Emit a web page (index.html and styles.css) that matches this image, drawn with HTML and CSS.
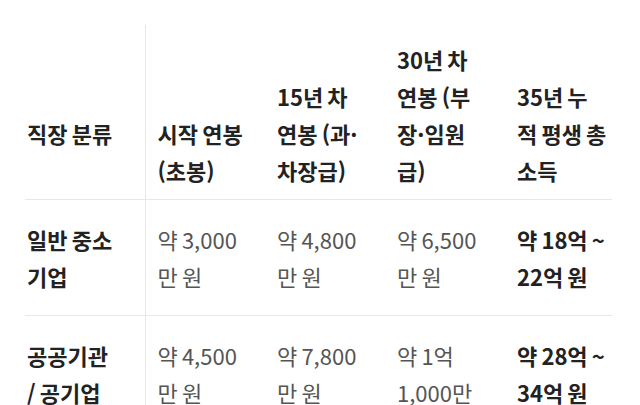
FILE: index.html
```html
<!DOCTYPE html>
<html lang="ko">
<head>
<meta charset="utf-8">
<title>직장 분류별 평생 소득</title>
<link rel="stylesheet" href="styles.css">
</head>
<body>
<div class="wrap">
<table class="salary">
  <colgroup>
    <col class="c1"><col class="c2"><col class="c3"><col class="c4"><col class="c5">
  </colgroup>
  <thead>
    <tr>
      <th class="cat cat-head">직장 분류</th>
      <th>시작 연봉 (초봉)</th>
      <th>15년 차 연봉 (과·차장급)</th>
      <th>30년 차 연봉 (부장·임원급)</th>
      <th class="total">35년 누적 평생 총 소득</th>
    </tr>
  </thead>
  <tbody>
    <tr>
      <th class="cat">일반 중소기업</th>
      <td>약 3,000만 원</td>
      <td>약 4,800만 원</td>
      <td>약 6,500만 원</td>
      <td class="total">약 18억 ~ 22억 원</td>
    </tr>
    <tr>
      <th class="cat">공공기관<br>/ 공기업</th>
      <td>약 4,500만 원</td>
      <td>약 7,800만 원</td>
      <td>약 1억 1,000만 원</td>
      <td class="total">약 28억 ~ 34억 원</td>
    </tr>
  </tbody>
</table>
</div>
</body>
</html>
```

FILE: styles.css
```css
html, body {
  margin: 0;
  padding: 0;
  background: #ffffff;
}

.wrap {
  padding: 25px 0 0 25px;
}

.salary {
  border-collapse: collapse;
  table-layout: fixed;
  width: 587px;
  font-family: "Noto Sans CJK KR", "Noto Sans", sans-serif;
  font-size: 22px;
  line-height: 37px;
  word-spacing: -2px;
  color: #555555;
}

.c1, .c2, .c3, .c4 { width: 120px; }
.c5 { width: 107px; }

.salary th,
.salary td {
  text-align: left;
  vertical-align: top;
  padding: 21px 21px 20px 12px;
  font-weight: 400;
}

.salary thead th {
  vertical-align: bottom;
  padding-top: 16px;
  padding-bottom: 10px;
  font-weight: 700;
  color: #222222;
  border-bottom: 1px solid #e8e8e8;
}

.salary tbody tr {
  border-bottom: 1px solid #e8e8e8;
}

.salary .cat {
  padding-left: 2px;
  padding-right: 31px;
  font-weight: 700;
  color: #222222;
  border-right: 1px solid #e8e8e8;
}

.salary thead .cat-head {
  padding-bottom: 47px;
}

.salary .total {
  padding-right: 3px;
  font-weight: 700;
  color: #222222;
}

.salary thead .total {
  padding-right: 5px;
}
```
